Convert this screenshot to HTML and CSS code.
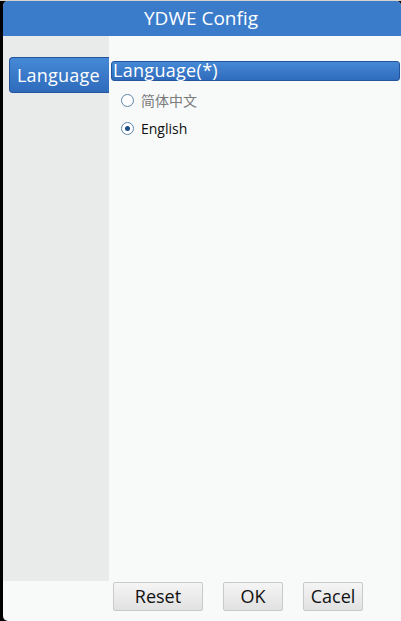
FILE: index.html
```html
<!DOCTYPE html>
<html lang="en">
<head>
    <meta charset="UTF-8">
    <meta name="viewport" content="width=device-width, initial-scale=1.0">
    <title>YDWE Config</title>
    <link rel="stylesheet" href="styles.css">
</head>
<body>
    <div class="window">
        <div class="titlebar">YDWE Config</div>

        <div class="main">
            <div class="sidebar">
                <div class="tab active">Language</div>
            </div>
            <div class="content">
                <div class="section-title">Language(*)</div>
                <label class="option disabled">
                    <span class="radio"></span>
                    <span>简体中文</span>
                </label>
                <label class="option">
                    <span class="radio checked"></span>
                    <span>English</span>
                </label>
            </div>
        </div>

        <div class="footer">
            <button class="btn btn-reset">Reset</button>
            <button class="btn btn-ok">OK</button>
            <button class="btn btn-cancel">Cacel</button>
        </div>
    </div>
</body>
</html>
```

FILE: styles.css
```css
html, body {
    margin: 0;
    height: 100%;
}
body {
    background: #000;
    font-family: "Open Sans", "Noto Sans CJK SC", sans-serif;
    border-top: 1px solid #d6d3cf;
    box-sizing: border-box;
}
.window {
    margin-left: 3px;
    height: 620px;
    display: flex;
    flex-direction: column;
    background-color: #f8fafa;
    border-radius: 5px 5px 0 5px;
    overflow: hidden;
}
.titlebar {
    height: 35px;
    background-color: #3b7cca;
    color: #fff;
    font-size: 19px;
    line-height: 35px;
    text-align: center;
    padding-right: 2px;
}
.main {
    flex: 1;
    display: flex;
}
.sidebar {
    width: 106px;
    background-color: #e9ebea;
    padding-top: 21px;
}
.tab {
    margin-left: 6px;
    height: 34px;
    line-height: 34px;
    padding-left: 7px;
    color: #fff;
    font-size: 18px;
    letter-spacing: 0.2px;
    border: 1px solid #24549c;
    border-right: none;
    border-radius: 4px 0 0 4px;
    background: linear-gradient(#4589d6, #2f6bbc);
}
.content {
    flex: 1;
    padding: 25px 1px 0 2px;
}
.section-title {
    height: 18px;
    line-height: 16px;
    padding-left: 1px;
    color: #fff;
    font-size: 18px;
    letter-spacing: 0.3px;
    border: 1px solid #24549c;
    border-radius: 3px;
    background: linear-gradient(#4589d6, #2f6bbc);
}
.option {
    display: flex;
    align-items: center;
    height: 28px;
    padding-left: 10px;
    font-size: 14px;
    color: #111;
}
.option:first-of-type {
    margin-top: 5px;
}
.option.disabled {
    color: #7a7a7a;
}
.radio {
    width: 11px;
    height: 11px;
    border: 1px solid #5d84aa;
    border-radius: 50%;
    background: #fff;
    margin-right: 7px;
    position: relative;
}
.radio.checked::after {
    content: "";
    position: absolute;
    left: 3px;
    top: 3px;
    width: 5px;
    height: 5px;
    border-radius: 50%;
    background: #1d4f86;
}
.footer {
    height: 39px;
    display: flex;
    align-items: flex-start;
    padding: 1px 0 0 110px;
    gap: 20px;
}
.btn {
    height: 29px;
    padding: 0 0 2px;
    font-family: "Open Sans", sans-serif;
    font-size: 18px;
    line-height: 24px;
    color: #111;
    border: 1px solid #c9c9c9;
    border-radius: 2px;
    background: linear-gradient(#f5f5f5, #e1e1e1);
}
.btn-reset {
    width: 90px;
}
.btn-ok,
.btn-cancel {
    width: 60px;
}
```
